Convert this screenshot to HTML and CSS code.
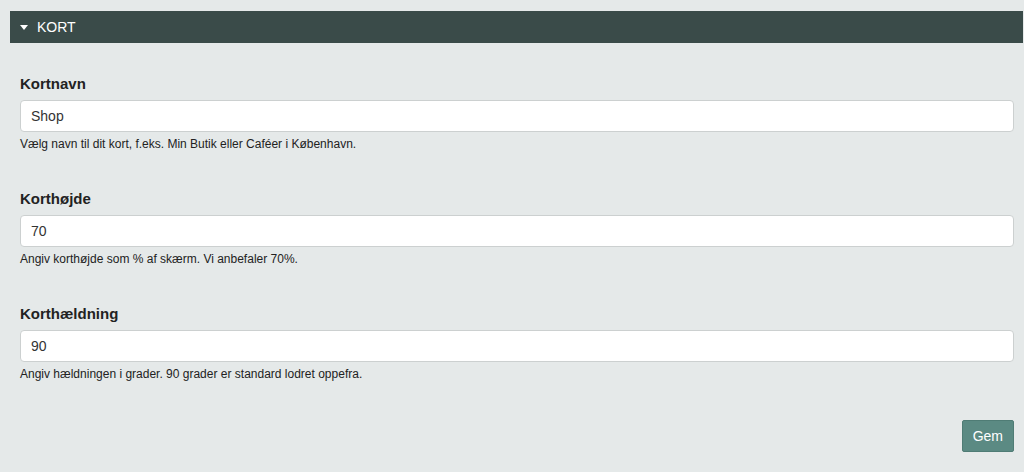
FILE: index.html
```html
<!DOCTYPE html>
<html>
<head>
    <meta charset="utf-8">
    <link rel="stylesheet" href="styles.css">
</head>
<body>
    <div class="panel-header">
        <span class="caret"></span>
        <span class="panel-title">KORT</span>
    </div>

    <form class="panel-body">
        <div class="field">
            <label class="field-label" for="kortnavn">Kortnavn</label>
            <input class="field-input" id="kortnavn" type="text" value="Shop">
            <div class="field-help">Vælg navn til dit kort, f.eks. Min Butik eller Caféer i København.</div>
        </div>

        <div class="field">
            <label class="field-label" for="korthojde">Korthøjde</label>
            <input class="field-input" id="korthojde" type="text" value="70">
            <div class="field-help">Angiv korthøjde som % af skærm. Vi anbefaler 70%.</div>
        </div>

        <div class="field">
            <label class="field-label" for="korthaeldning">Korthældning</label>
            <input class="field-input" id="korthaeldning" type="text" value="90">
            <div class="field-help">Angiv hældningen i grader. 90 grader er standard lodret oppefra.</div>
        </div>

        <div class="actions">
            <button class="button" type="button">Gem</button>
        </div>
    </form>
</body>
</html>
```

FILE: styles.css
```css
body {
    margin: 0;
    padding: 11px 1px 0 10px;
    background: #e5e9e9;
    font-family: "Liberation Sans", Arial, sans-serif;
    color: #222;
}
.panel-header {
    display: flex;
    align-items: center;
    height: 32px;
    background: #3a4b49;
    color: #fff;
    padding-left: 10px;
}
.caret {
    width: 0;
    height: 0;
    border-left: 4px solid transparent;
    border-right: 4px solid transparent;
    border-top: 5px solid #fff;
    margin-right: 9px;
}
.panel-title {
    font-size: 14px;
}
.panel-body {
    padding: 32px 9px 0 10px;
}
.field {
    margin-bottom: 39px;
}
.field-label {
    display: block;
    font-size: 15px;
    font-weight: bold;
    line-height: 18px;
    margin-bottom: 7px;
    color: #222;
}
.field-input {
    display: block;
    box-sizing: border-box;
    width: 100%;
    height: 32px;
    padding: 0 10px;
    font-family: inherit;
    font-size: 14px;
    color: #333;
    background: #fff;
    border: 1px solid #ccd0d0;
    border-radius: 4px;
}
.field-help {
    font-size: 12px;
    line-height: 13px;
    margin-top: 6px;
    color: #222;
}
.actions {
    display: flex;
    justify-content: flex-end;
    margin-top: 11px;
}
.button {
    height: 32px;
    padding: 0 10px;
    font-family: inherit;
    font-size: 14px;
    color: #fff;
    background: #5b8a83;
    border: 1px solid #4f7c75;
    border-radius: 2px;
    cursor: pointer;
}
```
